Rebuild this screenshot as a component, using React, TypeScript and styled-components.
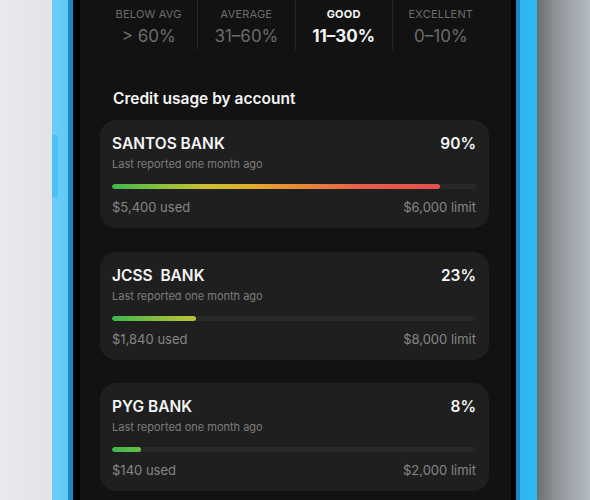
import styled, { createGlobalStyle } from "styled-components";

const GlobalStyle = createGlobalStyle`
  html, body {
    margin: 0;
    padding: 0;
    background: #e6e8ec;
  }
  * {
    box-sizing: border-box;
  }
  body {
    font-family: Inter, "Noto Sans", "Liberation Sans", sans-serif;
    -webkit-font-smoothing: antialiased;
  }
`;

const Page = styled.div`
  display: flex;
  width: 590px;
  height: 500px;
  overflow: hidden;
`;

const LeftGutter = styled.div`
  width: 52px;
  flex-shrink: 0;
  background: linear-gradient(90deg, #e9eaed, #e1e3e7);
`;

const RightGutter = styled.div`
  flex: 1;
  background: linear-gradient(90deg, #6d6e70 0%, #8e9296 35%, #b6bcc3 100%);
`;

const Frame = styled.div`
  position: relative;
  width: 485px;
  flex-shrink: 0;
  display: flex;
  padding: 0 17px 0 16px;
  background: linear-gradient(90deg, #6acdf9 0%, #5fc8f7 4%, #2eb6f2 96%, #30b8f3 100%);
`;

const SideButton = styled.div`
  position: absolute;
  left: 0;
  top: 135px;
  width: 6px;
  height: 62px;
  border-radius: 0 2px 2px 0;
  background: #4dbff2;
`;

const Rim = styled.div`
  flex: 1;
  display: flex;
  padding: 0 4px 0 5px;
  background: #1b86c2;
`;

const Bezel = styled.div`
  flex: 1;
  display: flex;
  padding: 0 5px 0 7px;
  background: #000;
`;

const Screen = styled.div`
  flex: 1;
  background: #121212;
  padding: 0 22px 0 20px;
  display: flex;
  flex-direction: column;
`;

const Tiers = styled.div`
  display: grid;
  grid-template-columns: repeat(4, 1fr);
  height: 50px;
`;

const Tier = styled.div<{ $first?: boolean; $active?: boolean }>`
  display: flex;
  flex-direction: column;
  align-items: center;
  padding-top: 6px;
  border-left: ${(p) => (p.$first ? "none" : "1px solid #262626")};
  color: ${(p) => (p.$active ? "#f4f4f4" : "#6c6c6c")};
`;

const TierLabel = styled.div<{ $active?: boolean }>`
  font-size: 11px;
  line-height: 16px;
  letter-spacing: 0.2px;
  text-transform: uppercase;
  font-weight: ${(p) => (p.$active ? 700 : 400)};
`;

const TierValue = styled.div<{ $active?: boolean }>`
  margin-top: 2px;
  font-size: 17px;
  line-height: 24px;
  font-weight: ${(p) => (p.$active ? 700 : 400)};
`;

const Heading = styled.h2`
  margin: 38px 0 10px;
  padding-left: 13px;
  font-size: 15.5px;
  line-height: 22px;
  font-weight: 600;
  color: #f5f5f5;
`;

const CardList = styled.div`
  display: flex;
  flex-direction: column;
  gap: 23.5px;
`;

const Card = styled.div`
  background: #1f1f1f;
  border-radius: 16px;
  padding: 14px 13px 12px 12px;
`;

const TitleRow = styled.div`
  display: flex;
  justify-content: space-between;
  align-items: center;
  font-size: 15.5px;
  line-height: 20px;
  font-weight: 600;
  color: #f5f5f5;
`;

const Subtitle = styled.div`
  margin-top: 3px;
  font-size: 11px;
  line-height: 15px;
  color: #7c7c7c;
`;

const Track = styled.div`
  margin-top: 12px;
  height: 5px;
  border-radius: 3px;
  background: #282828;
  overflow: hidden;
`;

const Fill = styled.div`
  height: 100%;
  border-radius: 3px;
  background-image: linear-gradient(
    90deg,
    #3cb84c 0%,
    #8fbf3f 14%,
    #cdbf35 26%,
    #e0ad30 38%,
    #e6883a 52%,
    #e4604a 68%,
    #e24b50 100%
  );
  background-repeat: no-repeat;
`;

const MoneyRow = styled.div`
  margin-top: 9px;
  display: flex;
  justify-content: space-between;
  font-size: 13px;
  line-height: 18px;
  color: #868686;
`;

type Account = {
  name: string;
  pct: number;
  used: string;
  limit: string;
};

const accounts: Account[] = [
  { name: "SANTOS BANK", pct: 90, used: "$5,400", limit: "$6,000" },
  { name: "JCSS\u00a0 BANK", pct: 23, used: "$1,840", limit: "$8,000" },
  { name: "PYG BANK", pct: 8, used: "$140", limit: "$2,000" },
];

const tiers = [
  { label: "Below avg", value: "> 60%" },
  { label: "Average", value: "31–60%" },
  { label: "Good", value: "11–30%", active: true },
  { label: "Excellent", value: "0–10%" },
];

const AccountCard = ({ account }: { account: Account }) => {
  const fillPct = Math.max(account.pct, 7);
  return (
    <Card>
      <TitleRow>
        <span>{account.name}</span>
        <span>{account.pct}%</span>
      </TitleRow>
      <Subtitle>Last reported one month ago</Subtitle>
      <Track>
        <Fill
          style={{
            width: `${fillPct}%`,
            backgroundSize: `${10000 / fillPct}% 100%`,
          }}
        />
      </Track>
      <MoneyRow>
        <span>{account.used} used</span>
        <span>{account.limit} limit</span>
      </MoneyRow>
    </Card>
  );
};

export default function App() {
  return (
    <>
      <GlobalStyle />
      <Page>
        <LeftGutter />
        <Frame>
          <SideButton />
          <Rim>
            <Bezel>
              <Screen>
                <Tiers>
                  {tiers.map((t, i) => (
                    <Tier key={t.label} $first={i === 0} $active={t.active}>
                      <TierLabel $active={t.active}>{t.label}</TierLabel>
                      <TierValue $active={t.active}>{t.value}</TierValue>
                    </Tier>
                  ))}
                </Tiers>
                <Heading>Credit usage by account</Heading>
                <CardList>
                  {accounts.map((a) => (
                    <AccountCard key={a.name} account={a} />
                  ))}
                </CardList>
              </Screen>
            </Bezel>
          </Rim>
        </Frame>
        <RightGutter />
      </Page>
    </>
  );
}
